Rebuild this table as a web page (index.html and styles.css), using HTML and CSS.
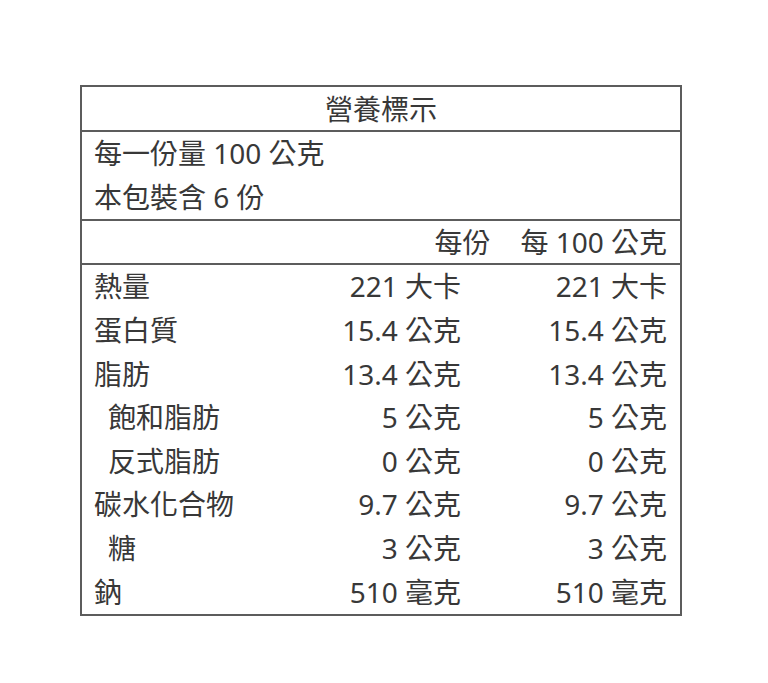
FILE: index.html
```html
<!DOCTYPE html>
<html lang="zh-Hant">
<head>
<meta charset="utf-8">
<title>營養標示</title>
<link rel="stylesheet" href="styles.css">
</head>
<body>
<div class="page">
  <div class="label">
    <div class="title">營養標示</div>
    <div class="serving">
      <div class="line">每一份量 100 公克</div>
      <div class="line">本包裝含 6 份</div>
    </div>
    <div class="head">
      <span class="per">每份</span><span>每 100 公克</span>
    </div>
    <div class="rows">
      <div class="row"><div class="name">熱量</div><div class="v1">221 大卡</div><div class="v2">221 大卡</div></div>
      <div class="row"><div class="name">蛋白質</div><div class="v1">15.4 公克</div><div class="v2">15.4 公克</div></div>
      <div class="row"><div class="name">脂肪</div><div class="v1">13.4 公克</div><div class="v2">13.4 公克</div></div>
      <div class="row"><div class="name sub">飽和脂肪</div><div class="v1">5 公克</div><div class="v2">5 公克</div></div>
      <div class="row"><div class="name sub">反式脂肪</div><div class="v1">0 公克</div><div class="v2">0 公克</div></div>
      <div class="row"><div class="name">碳水化合物</div><div class="v1">9.7 公克</div><div class="v2">9.7 公克</div></div>
      <div class="row"><div class="name sub">糖</div><div class="v1">3 公克</div><div class="v2">3 公克</div></div>
      <div class="row"><div class="name">鈉</div><div class="v1">510 毫克</div><div class="v2">510 毫克</div></div>
    </div>
  </div>
</div>
</body>
</html>
```

FILE: styles.css
```css
html, body {
  margin: 0;
  padding: 0;
  background: #ffffff;
}

.page {
  padding: 85px 0 0 80px;
}

.label {
  width: 598px;
  border: 2px solid #5c5c5c;
  font-family: "Noto Sans", "Noto Sans CJK TC", sans-serif;
  font-size: 28px;
  color: #383838;
}

.title {
  height: 43px;
  line-height: 45px;
  text-align: center;
}

.serving {
  border-top: 2px solid #5c5c5c;
  height: 87px;
  padding-left: 12px;
}

.line {
  height: 44px;
  line-height: 43px;
}

.head {
  border-top: 2px solid #5c5c5c;
  height: 42px;
  line-height: 42px;
  text-align: right;
  padding-right: 13px;
}

.per {
  margin-right: 30px;
}

.rows {
  border-top: 2px solid #5c5c5c;
  height: 349px;
  display: grid;
  grid-template-rows: repeat(8, 1fr);
}

.row {
  display: grid;
  grid-template-columns: 191px 204px 203px;
  align-items: center;
  padding-bottom: 3px;
}

.name {
  padding-left: 12px;
}

.name.sub {
  padding-left: 26px;
}

.v1 {
  text-align: right;
  padding-right: 16px;
}

.v2 {
  text-align: right;
  padding-right: 13px;
}
```
